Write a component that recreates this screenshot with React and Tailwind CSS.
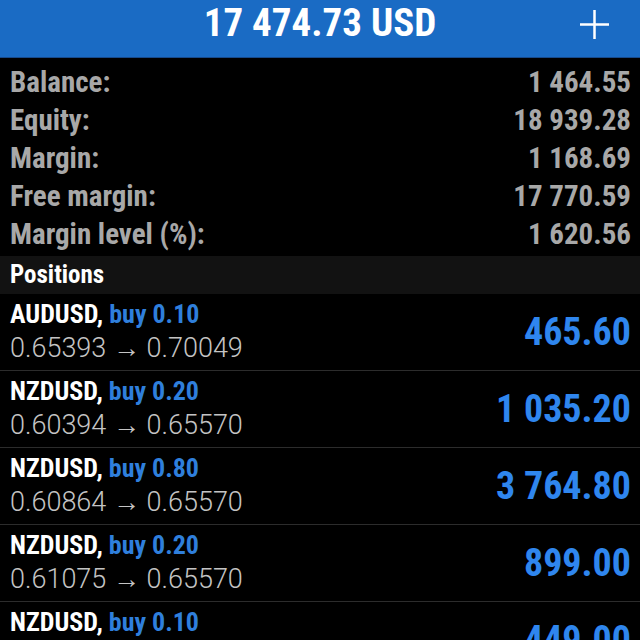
const stats = [
  ["Balance:", "1 464.55"],
  ["Equity:", "18 939.28"],
  ["Margin:", "1 168.69"],
  ["Free margin:", "17 770.59"],
  ["Margin level (%):", "1 620.56"],
];

const positions = [
  { symbol: "AUDUSD", lot: "buy 0.10", open: "0.65393", close: "0.70049", profit: "465.60" },
  { symbol: "NZDUSD", lot: "buy 0.20", open: "0.60394", close: "0.65570", profit: "1 035.20" },
  { symbol: "NZDUSD", lot: "buy 0.80", open: "0.60864", close: "0.65570", profit: "3 764.80" },
  { symbol: "NZDUSD", lot: "buy 0.20", open: "0.61075", close: "0.65570", profit: "899.00" },
  { symbol: "NZDUSD", lot: "buy 0.10", open: "0.61075", close: "0.65570", profit: "449.00" },
];

export default function App() {
  return (
    <div className="w-[640px] h-[640px] overflow-hidden bg-black font-['Roboto','Noto_Sans',sans-serif]">
      {/* header */}
      <div className="h-[58px] bg-[#1a6bc4] flex items-start justify-center pt-[2px] relative border-b border-[#174a8c]">
        <span className="text-white font-bold font-stretch-condensed text-[39px] leading-[42px]">17 474.73 USD</span>
        <svg className="absolute right-[30px] top-[9px]" width="31" height="31" viewBox="0 0 31 31">
          <path d="M15.5 1v29M1 15.5h29" stroke="white" strokeWidth="2.5" />
        </svg>
      </div>

      {/* account summary */}
      <div className="pt-[5px] pb-[3px]">
        {stats.map(([label, value]) => (
          <div key={label} className="h-[38px] flex items-center justify-between pl-[10px] pr-[9px] text-[#a8a8a8] font-bold font-stretch-condensed text-[29px] leading-none">
            <span>{label}</span>
            <span>{value}</span>
          </div>
        ))}
      </div>

      <div className="h-[38px] bg-[#121212] flex items-center pl-[10px] text-white font-bold font-stretch-condensed text-[25px]">
        Positions
      </div>

      {positions.map((p, i) => (
        <div key={i} className="h-[77px] flex items-center justify-between pl-[10px] pr-[9px] border-b border-[#2c2c2c]">
          <div className="flex flex-col gap-[4px]">
            <div className="font-bold font-stretch-condensed text-[26px] leading-[29px]">
              <span className="text-white">{p.symbol},</span>{" "}
              <span className="text-[#2f7fdc]">{p.lot}</span>
            </div>
            <div className="text-[#c4c4c4] text-[27px] leading-[31px] font-light">
              {p.open} <span className="font-['Liberation_Sans',sans-serif] font-normal">→</span> {p.close}
            </div>
          </div>
          <span className="text-[#2f86ee] font-bold font-stretch-condensed text-[38px] leading-none">{p.profit}</span>
        </div>
      ))}
    </div>
  );
}
